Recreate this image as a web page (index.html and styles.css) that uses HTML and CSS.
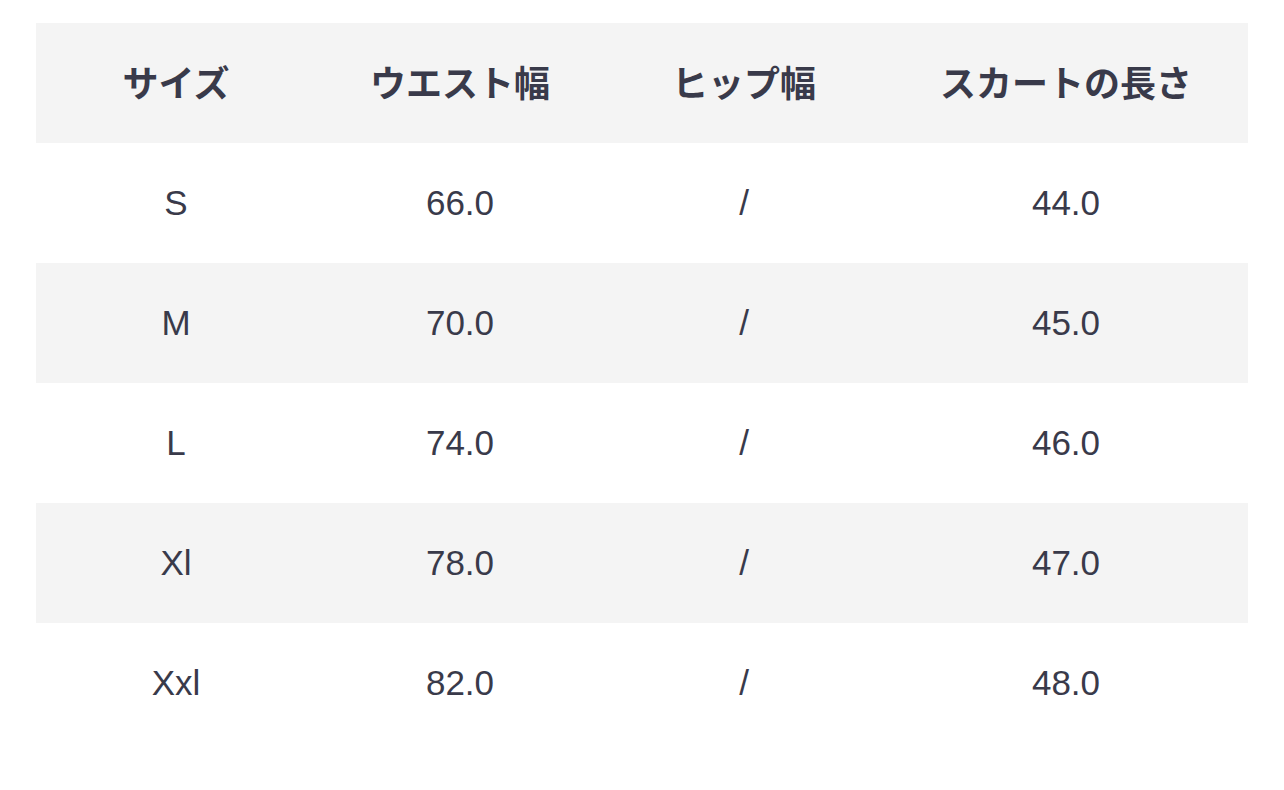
FILE: index.html
```html
<!DOCTYPE html>
<html lang="ja">
<head>
<meta charset="utf-8">
<link rel="stylesheet" href="styles.css">
</head>
<body>
<div class="wrap">
<table class="size-table">
  <colgroup>
    <col class="c1"><col class="c2"><col class="c3"><col class="c4">
  </colgroup>
  <thead>
    <tr><th>サイズ</th><th>ウエスト幅</th><th>ヒップ幅</th><th>スカートの長さ</th></tr>
  </thead>
  <tbody>
    <tr><td>S</td><td>66.0</td><td>/</td><td>44.0</td></tr>
    <tr class="alt"><td>M</td><td>70.0</td><td>/</td><td>45.0</td></tr>
    <tr><td>L</td><td>74.0</td><td>/</td><td>46.0</td></tr>
    <tr class="alt"><td>Xl</td><td>78.0</td><td>/</td><td>47.0</td></tr>
    <tr><td>Xxl</td><td>82.0</td><td>/</td><td>48.0</td></tr>
  </tbody>
</table>
</div>
</body>
</html>
```
FILE: styles.css
```css
html, body {
  margin: 0;
  background: #ffffff;
}
.wrap {
  padding: 23px 36px 0 36px;
}
.size-table {
  width: 1212px;
  border-collapse: collapse;
  table-layout: fixed;
  color: #393a4a;
  font-family: "Liberation Sans", Arial, "Noto Sans CJK JP", sans-serif;
}
.c1 { width: 280px; }
.c2 { width: 288px; }
.c3 { width: 280px; }
.c4 { width: 364px; }
.size-table th,
.size-table td {
  box-sizing: border-box;
  height: 120px;
  padding: 0;
  text-align: center;
  vertical-align: middle;
}
.size-table th {
  font-family: "Noto Sans CJK JP", sans-serif;
  font-weight: 700;
  font-size: 36px;
  line-height: 1;
  padding-bottom: 4px;
  background: #f4f4f4;
}
.size-table td {
  font-size: 35px;
}
.size-table tr.alt td {
  background: #f4f4f4;
}
```
